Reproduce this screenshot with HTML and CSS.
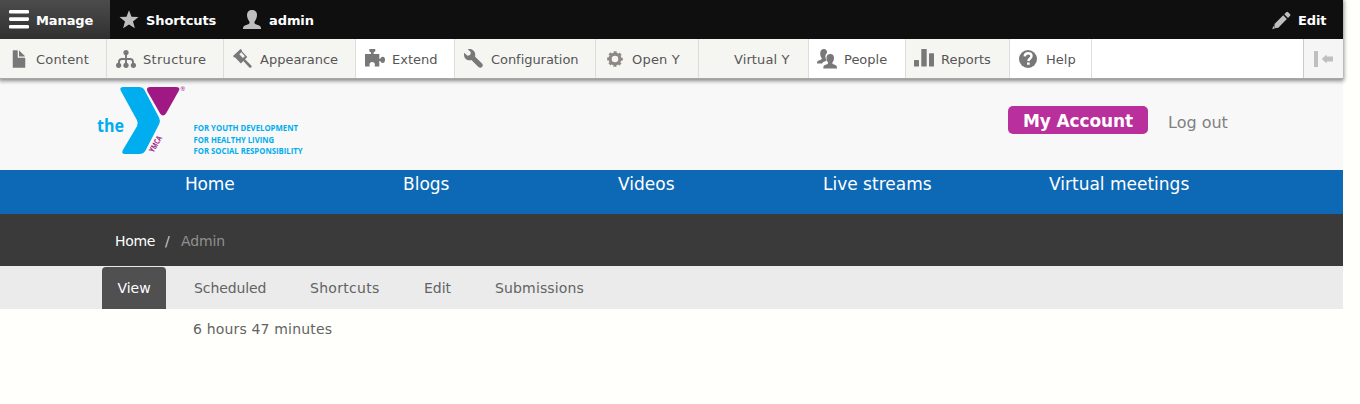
FILE: index.html
```html
<!DOCTYPE html>
<html lang="en">
<head>
<meta charset="utf-8">
<title>Admin | Virtual Y</title>
<link rel="stylesheet" href="styles.css">
</head>
<body>
<div class="page">
<header class="admin">
<nav class="bar">
<a class="bar-item bar-manage"><svg class="icon" viewBox="0 0 20 20"><g fill="#fff"><rect y="1" width="20" height="3.600" rx="1.300"/><rect y="8.300" width="20" height="3.600" rx="1.300"/><rect y="15.900" width="20" height="3.600" rx="1.300"/></g></svg><span>Manage</span></a>
<a class="bar-item bar-shortcuts"><svg class="icon" viewBox="0 0 20 20"><path d="M10 .3l2.500 6.500 7 .3-5.500 4.300 1.900 6.900L10 14.400l-5.900 3.900L6 11.400.500 7.100l7-.3z"/></svg><span>Shortcuts</span></a>
<a class="bar-item bar-user"><svg class="icon" viewBox="0 0 20 20"><path d="M10 0c3.300 0 5 2 5 5 0 2.600-1 4.800-2.200 6.200-.8 1.300-.3 2.500 1 3l3.300 1.200c1.300.5 1.900 1.500 2 3.500H.900c.1-2 .7-3 2-3.500l3.300-1.200c1.300-.5 1.800-1.700 1-3C6 9.800 5 7.600 5 5c0-3 1.700-5 5-5z"/></svg><span>admin</span></a>
<a class="bar-item bar-edit"><svg class="icon" viewBox="0 0 20 20"><path d="M2.500 14L11.200 5.300l3.700 3.700L6.300 17.700l-3.900.500zM12.300 4.200l1.900-1.900c.7-.7 1.300-.7 2 0l1.700 1.700c.7.7.7 1.300 0 2L16 7.900zM1.300 15.900L.3 19.200l3.200-1z"/></svg><span>Edit</span></a>
</nav>
<nav class="tray">
<a class="tray-item w-content"><svg class="icon" viewBox="0 0 16 16"><path d="M12.502 7h-5C7.226 7 7 6.775 7 6.500v-5c0-.275-.225-.5-.5-.5h-3c-.275 0-.5.225-.5.5v13.029c0 .275.225.5.5.5h9.002c.275 0 .5-.225.5-.5V7.500c0-.275-.225-.5-.5-.5zM8.502 6h4c.275 0 .34-.159.146-.354L8.355 1.354c-.195-.195-.353-.129-.353.146v4c0 .275.225.5.5.5z"/></svg><span>Content</span></a>
<a class="tray-item w-structure"><svg class="icon" viewBox="0 0 20 20"><g fill="none" stroke="#787878" stroke-width="1.900"><path d="M10 4v12M3 16v-3q0-3 3-3h8q3 0 3 3v3"/></g><circle cx="10" cy="3.600" r="2.600"/><circle cx="2.600" cy="16.300" r="2.600"/><circle cx="10" cy="16.300" r="2.600"/><circle cx="17.400" cy="16.300" r="2.600"/></svg><span>Structure</span></a>
<a class="tray-item w-appearance"><svg class="icon" viewBox="0 0 20 20"><path fill-rule="evenodd" d="M7.500 0L0 7l1.100 1.400.8-.2 6 6.300 2.400-2.400 6 6.300c1.400 1.300 3.200-.4 2-1.800l-6.300-6.300L14.300 8 8.600 2l.6-.8zM8.300 3.300l3.600 3.900-2 1.900-3.600-3.900z"/></svg><span>Appearance</span></a>
<a class="tray-item tray-white w-extend"><svg class="icon" viewBox="0 0 20 20"><path d="M0 5h6V3.200C5 3 4.300 2.500 4.300 1.500V0h6v1.500C10.300 2.500 9.600 3 8.600 3.200V5h5.700v4.800h1c.4-1.300 1.300-2 2.500-2 1.500 0 2.200 1.200 2.200 3s-.7 3.200-2.200 3.200c-1.200 0-2.100-.8-2.500-2h-1v5.600H9.600c0-.6.300-1 .3-2 0-1.600-1-2.600-2.700-2.600s-2.700 1-2.700 2.600c0 1 .3 1.400.3 2H0z"/></svg><span>Extend</span></a>
<a class="tray-item w-config"><svg class="icon" viewBox="0 0 16 16"><path d="M14.416 11.586l-.01-.009L8.750 5.921c.15-.449.252-.921.252-1.421C9.002 2.015 6.986 0 4.500 0c-.505 0-.981.102-1.434.255l2.431 2.431-.588 2.196-2.196.588L.268 3.025C.106 3.489 0 3.981 0 4.500 0 6.986 2.014 9 4.500 9c.5 0 .972-.102 1.421-.251l5.667 5.665c.781.781 2.047.781 2.828 0s.781-2.047 0-2.828z"/></svg><span>Configuration</span></a>
<a class="tray-item w-openy"><svg class="icon" viewBox="0 0 20 20"><g fill="none" stroke="#8f8784"><circle cx="10" cy="10" r="4.900" stroke-width="3.200"/><circle cx="10" cy="10" r="6.900" stroke-width="1.900" stroke-dasharray="3 2.419" stroke-dashoffset="1.500"/></g></svg><span>Open Y</span></a>
<a class="tray-item w-virtual"><span class="icon"></span><span>Virtual Y</span></a>
<a class="tray-item tray-white w-people"><svg class="icon" viewBox="0 0 20 20"><path d="M6.900 0C9 0 10.300 1.300 10 4 8.500 5 8 7 8.700 9.200c.2.800.8 1.500 1 2.400L6.500 13c-.7.3-1 .8-1.300 1.400H0c0-1.500.5-2.500 1.700-2.900l2.100-.8c1-.4 1.200-1.300.7-2C3.700 7.700 3.200 6.500 3.200 4.400 3.200 1.600 4.500 0 6.900 0z"/><path d="M13.300 4.900c2.500 0 3.700 1.600 3.700 4 0 2-.6 3.200-1.400 4.200-.6.900-.3 1.800.7 2.200l2.100.8c1.100.4 1.600 1.400 1.600 3.400H6.300c0-2 .5-3 1.600-3.400l2.200-.8c1-.4 1.300-1.300.7-2.200-.8-1-1.300-2.200-1.300-4.200 0-2.400 1.300-4 3.800-4z"/></svg><span>People</span></a>
<a class="tray-item w-reports"><svg class="icon" viewBox="0 0 20 20"><rect y="11" width="5" height="6.600" rx=".6"/><rect x="7.300" width="5.400" height="17.600" rx=".6"/><rect x="15" y="4.300" width="5" height="13.300" rx=".6"/></svg><span>Reports</span></a>
<a class="tray-item tray-white w-help"><svg class="icon" viewBox="0 0 20 20"><circle cx="9" cy="10" r="9"/><path d="M5.700 7.300C5.900 5.100 7.300 4.300 9.200 4.300c2 0 3.300 1 3.300 2.800 0 2.400-3.100 2.300-3.100 5" fill="none" stroke="#fff" stroke-width="2.400"/><rect x="8.100" y="13.400" width="2.600" height="2.400" fill="#fff"/></svg><span>Help</span></a>
<a class="tray-toggle"><svg viewBox="0 0 20 20" class="icon"><path d="M1 2h4v16H1zM8.800 10l4.800-4.600v2.100H20v5h-6.400v2.100z"/></svg></a>
</nav>
</header>
<section class="brand">
<svg class="logo" viewBox="0 0 210 74">
<g fill="#00adee"><path d="M26.500 2H42q3.800 0 5.600 3.300L62 32.500q1.700 3.200.2 6.500L48.800 65Q46.800 69 42.500 69H28q-4.300 0-2-4.300l14-23.500q1.500-3 0-6L23.800 5.700Q22 2 26.500 2z"/>
<text class="logo-the" x="0" y="46.500" textLength="27" lengthAdjust="spacingAndGlyphs">the</text>
<g class="logo-tag"><text x="96.500" y="46" textLength="104.500" lengthAdjust="spacingAndGlyphs">FOR YOUTH DEVELOPMENT</text><text x="96.500" y="57.500" textLength="80.500" lengthAdjust="spacingAndGlyphs">FOR HEALTHY LIVING</text><text x="96.500" y="69" textLength="109" lengthAdjust="spacingAndGlyphs">FOR SOCIAL RESPONSIBILITY</text></g></g>
<g fill="#a01884"><path d="M53.500 2h25.400q5 0 2.800 4L69 28.500q-3 4-5.900 0L50.500 6.500Q48.500 2 53.500 2z"/><text class="logo-ymca" transform="translate(56.500 68) rotate(-60)" textLength="17.500" lengthAdjust="spacingAndGlyphs">YMCA</text><text class="logo-r" x="83.300" y="6">®</text></g>
</svg>
<div class="account"><a class="account-btn">My Account</a><a class="logout">Log out</a></div>
</section>
<nav class="main"><a class="m1">Home</a><a class="m2">Blogs</a><a class="m3">Videos</a><a class="m4">Live streams</a><a class="m5">Virtual meetings</a></nav>
<nav class="crumbs"><a class="home">Home</a><span class="slash">/</span><span class="current">Admin</span></nav>
<nav class="tabs"><a class="tab tab-active">View</a><a class="tab s1">Scheduled</a><a class="tab s2">Shortcuts</a><a class="tab s3">Edit</a><a class="tab s4">Submissions</a></nav>
<main class="content">6 hours 47 minutes</main>
</div>
</body>
</html>
```
FILE: styles.css
```css
body { margin: 0; background: #fffffb; font-family: Verdana, "DejaVu Sans", sans-serif; color: #636363; height: 404px; overflow: hidden; }
.page { width: 1343px; }
.admin { position: relative; font-size: 13px; box-shadow: 0 1px 4px 1px rgba(0,0,0,.45); white-space: nowrap; }
.icon { width: 20px; height: 20px; flex: none; fill: #787878; overflow: visible; }
.bar { display: flex; height: 39px; background: #0f0f0f; color: #fff; font-weight: 700; letter-spacing: -.1px; }
.bar-item { display: flex; box-sizing: border-box; padding: 9px 0 0 9px; gap: 7px; line-height: 24px; }
.bar-item .icon { fill: #bebebe; margin-top: 1px; }
.bar-manage .icon { margin-top: 0; }
.bar-manage { width: 110px; background: linear-gradient(#4c4c4c, #303030); }
.bar-shortcuts { width: 123px; }
.bar-user { width: 120px; }
.bar-edit { margin-left: auto; width: 80px; gap: 6px; }
.tray { display: flex; height: 40px; background: #fff; border-bottom: 1px solid #a6a6a6; box-sizing: border-box; color: #565656; }
.tray-item { display: flex; box-sizing: border-box; padding: 10px 0 0 9px; gap: 7px; line-height: 21px; background: #f5f5f1; border-right: 1px solid #ddd; }
.tray-white { background: #fff; }
.w-content { width: 107px; letter-spacing: .2px; }
.w-structure { width: 117px; letter-spacing: .3px; }
.w-appearance { width: 132px; }
.w-extend { width: 99px; }
.w-config { width: 141px; letter-spacing: -.05px; }
.w-openy { width: 103px; letter-spacing: .2px; }
.w-virtual { width: 110px; padding-left: 8px; letter-spacing: .1px; }
.w-people { width: 97px; padding-left: 8px; }
.w-reports { width: 104px; padding-left: 8px; }
.w-help { width: 82px; }
.tray-toggle { margin-left: auto; width: 30px; border-left: 1px solid #ccc; background: #f5f5f5; padding: 10px 0 0 9px; }
.tray-toggle .icon { fill: #bfbfbf; }
.brand { display: flex; justify-content: space-between; height: 91px; background: #f8f8f8; padding: 0 0 0 97px; }
.logo { width: 210px; height: 74px; margin-top: 6px; }
.logo text { font-family: "Open Sans", "Noto Sans", sans-serif; font-weight: 700; }
.logo .logo-the { font-size: 17px; }
.logo .logo-tag { font-size: 8px; }
.logo .logo-ymca { font-size: 8px; }
.logo .logo-r { font-size: 6px; font-weight: 400; }
.account { display: flex; gap: 20px; width: 335px; margin-top: 27px; font-size: 17px; line-height: 30px; white-space: nowrap; }
.account-btn { width: 140px; height: 28px; text-align: center; border-radius: 5px; background: #b92f9b; color: #fff; font-weight: 700; letter-spacing: -.1px; }
.logout { color: #808080; font-size: 16px; line-height: 33px; }
.main { display: flex; height: 44px; background: #0d69b5; color: #fff; font-size: 17px; line-height: 29px; padding-left: 185px; white-space: nowrap; }
.m1 { width: 218px; letter-spacing: -.2px; }
.m2 { width: 215px; }
.m3 { width: 205px; }
.m4 { width: 226px; }
.crumbs { display: flex; height: 52px; background: #3a3a3a; color: #fff; font-size: 14px; line-height: 54px; padding-left: 115px; letter-spacing: -.1px; }
.home { width: 40px; letter-spacing: -.3px; }
.slash { width: 16px; margin-left: 10px; color: #ccc; }
.current { color: #909090; }
.tabs { display: flex; height: 43px; background: #ebebeb; font-size: 14px; line-height: 44px; padding-left: 102px; white-space: nowrap; }
.tab-active { width: 64px; height: 42px; margin: 1px 28px 0 0; line-height: 42px; text-align: center; border-radius: 4px 4px 0 0; background: #505050; color: #fff; }
.s1 { width: 116px; letter-spacing: -.1px; }
.s2 { width: 114px; letter-spacing: .3px; }
.s3 { width: 71px; }
.s4 { letter-spacing: .15px; }
.content { padding-left: 193px; font-size: 14px; line-height: 40px; letter-spacing: .17px; }
```
